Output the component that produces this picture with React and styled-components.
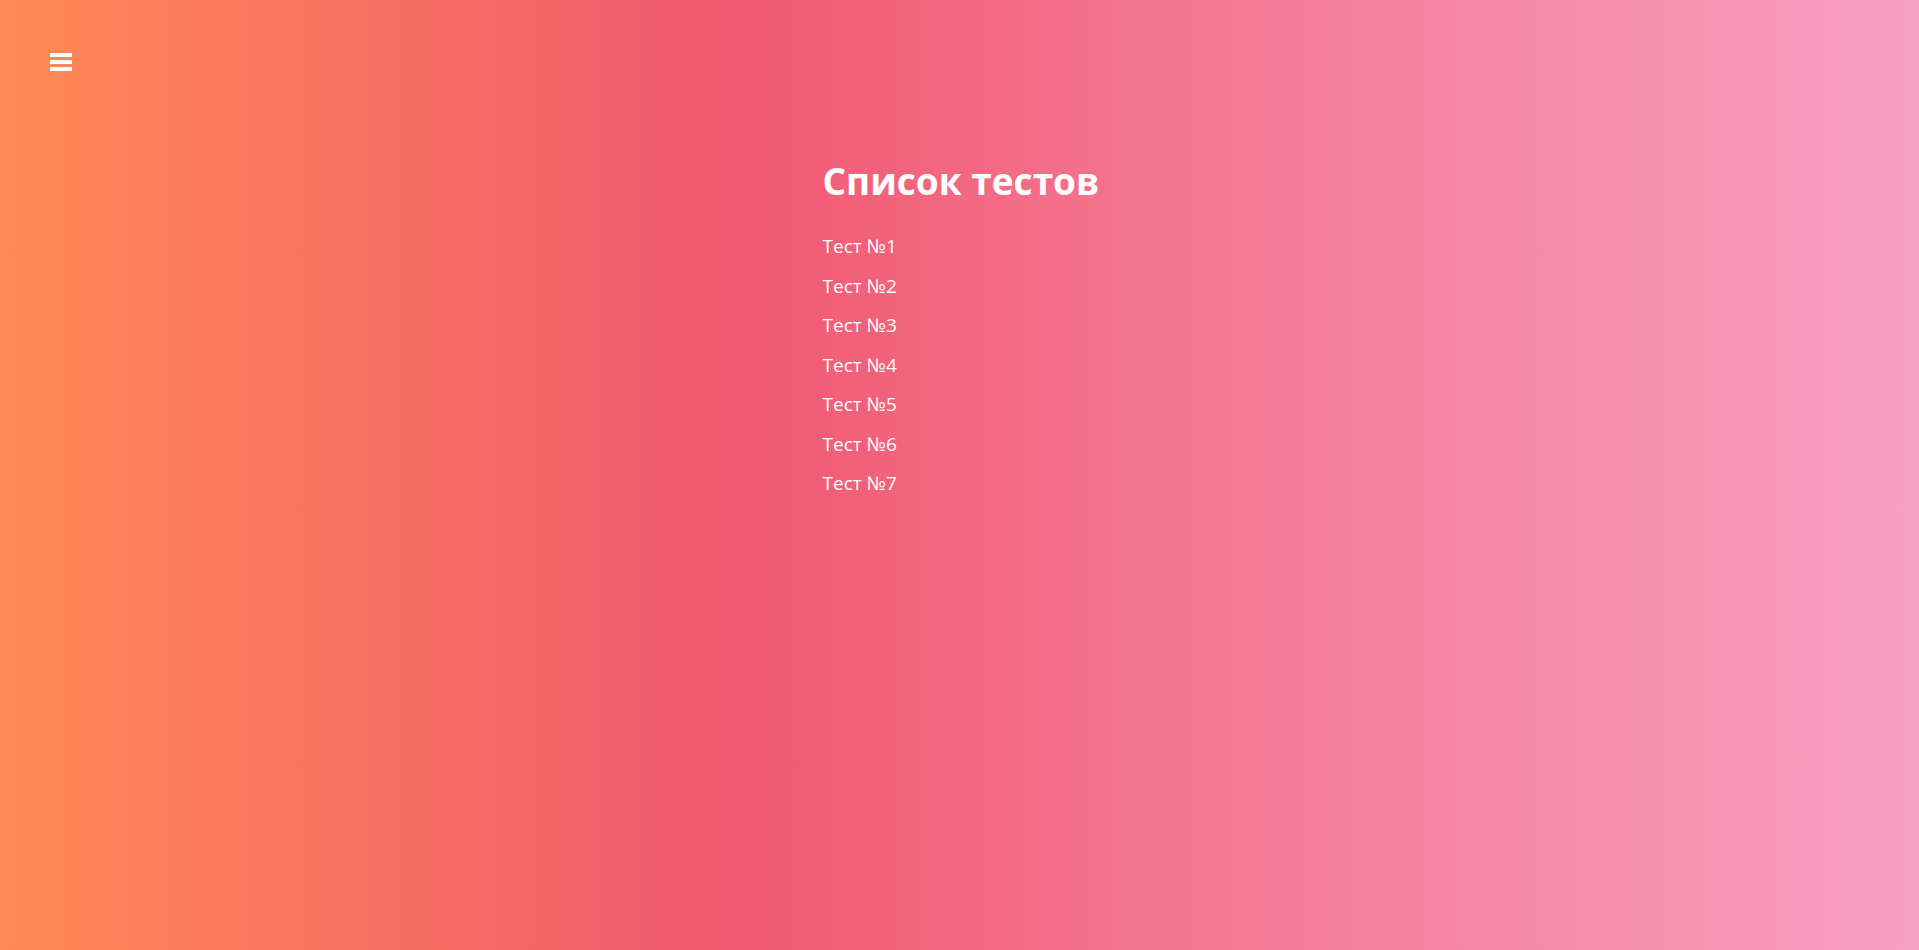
import React from 'react';
import styled, { createGlobalStyle } from 'styled-components';

const GlobalStyle = createGlobalStyle`
  html, body {
    margin: 0;
    padding: 0;
  }
  body {
    font-family: "Open Sans", "Liberation Sans", sans-serif;
    color: #fff;
  }
`;

const Page = styled.div`
  min-height: 100vh;
  background: linear-gradient(to right, #ff8a55 0%, #f0596f 38%, #f47590 60%, #f7a0c2 100%);
`;

const Header = styled.header`
  display: flex;
  align-items: center;
  padding: 53px 0 0 50px;
`;

const MenuButton = styled.button`
  display: flex;
  padding: 0;
  border: 0;
  background: none;
  cursor: pointer;
`;

const Main = styled.main`
  width: 274px;
  margin: 84px auto 0;
`;

const Title = styled.h1`
  margin: 0;
  font-size: 37px;
  font-weight: 700;
  white-space: nowrap;
`;

const TestList = styled.ul`
  list-style: none;
  margin: 26px 0 0;
  padding: 0;
  display: flex;
  flex-direction: column;
  gap: 11px;
`;

const TestLink = styled.a`
  display: block;
  font-size: 19px;
  line-height: 28.5px;
  color: #fff;
  text-decoration: none;

  &:hover {
    text-decoration: underline;
  }
`;

const tests = [1, 2, 3, 4, 5, 6, 7];

const BarsIcon = () => (
  <svg width="22" height="18" viewBox="0 0 22 18">
    <rect x="0" y="0" width="22" height="4" fill="#fff" />
    <rect x="0" y="7" width="22" height="4" fill="#fff" />
    <rect x="0" y="14" width="22" height="4" fill="#fff" />
  </svg>
);

export default function App() {
  return (
    <Page>
      <GlobalStyle />
      <Header>
        <MenuButton aria-label="Меню">
          <BarsIcon />
        </MenuButton>
      </Header>
      <Main>
        <Title>Список тестов</Title>
        <TestList>
          {tests.map((n) => (
            <li key={n}>
              <TestLink href="#">Тест №{n}</TestLink>
            </li>
          ))}
        </TestList>
      </Main>
    </Page>
  );
}
